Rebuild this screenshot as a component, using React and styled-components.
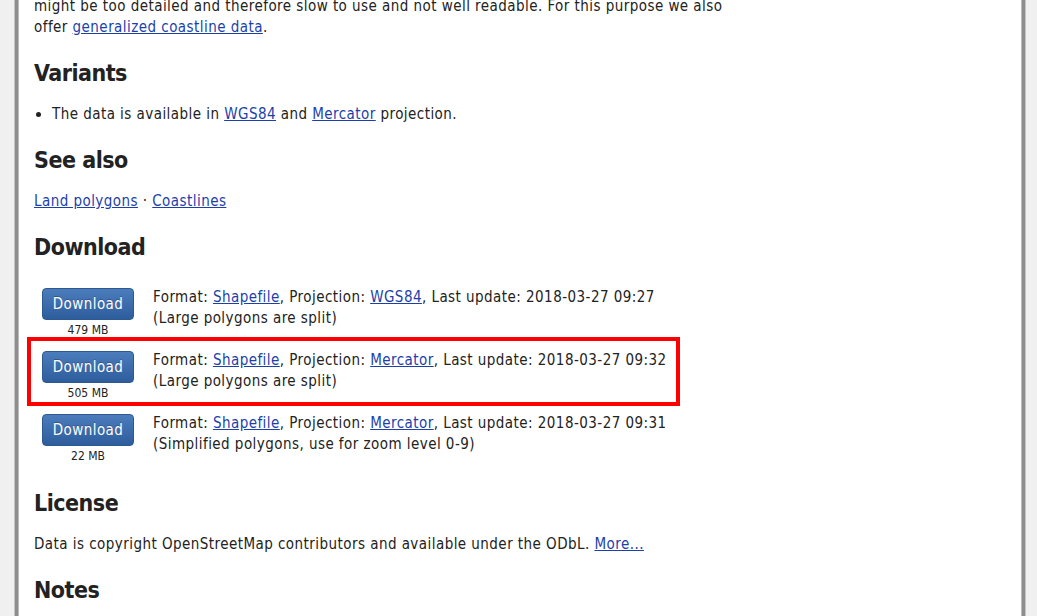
import React from 'react';
import styled, {createGlobalStyle} from 'styled-components';

const GlobalStyle = createGlobalStyle`
    html, body {
        margin: 0;
        padding: 0;
        background: #f0f0f0;
        overflow: hidden;
    }
    body {
        font-family: "DejaVu Sans Condensed", "DejaVu Sans", sans-serif;
        font-size: 15px;
        line-height: 21px;
        letter-spacing: 0.45px;
        color: #222;
    }
`

const Page = styled.div`
    margin-left: 15px;
    width: 1010px;
    height: 616px;
    background: #fff;
    border-left: 3px solid #8e8e8e;
    border-right: 3px solid #8e8e8e;
    box-shadow: -1px 0 0 #c4c4c4, 1px 0 0 #c4c4c4, inset 1px 0 0 #b8b8b8, inset -1px 0 0 #b8b8b8;
    padding: 0 16px;
    box-sizing: border-box;
    overflow: hidden;
`

const Lead = styled.p`
    margin: -4px 0 0;
    white-space: nowrap;
`

const Heading = styled.h2`
    font-size: 23px;
    line-height: 31px;
    letter-spacing: -0.5px;
    font-weight: bold;
    margin: 20px 0 15px;
    color: #222;
`

const Text = styled.p`
    margin: 0;
`

const Link = styled.a`
    color: #1c3fab;
    text-decoration: underline;
`

const List = styled.ul`
    margin: 0;
    padding-left: 18px;
`

const Rows = styled.div`
    display: flex;
    flex-direction: column;
    gap: 8px;
    margin: 18px 0 26px;
`

const Row = styled.div`
    display: flex;
    align-items: flex-start;
    gap: 19px;
    width: 639px;
    height: 55px;
    box-sizing: border-box;
    padding: 6px 0 0 8px;
    outline: ${props => props.$marked ? "4px solid #ff0000" : "none"};
    outline-offset: 3px;
`

const ButtonCell = styled.div`
    display: flex;
    flex-direction: column;
    align-items: center;
    width: 92px;
    padding-top: 1px;
`

const Button = styled.a`
    display: flex;
    align-items: center;
    justify-content: center;
    width: 92px;
    height: 32px;
    box-sizing: border-box;
    border: 1px solid #2d5890;
    border-radius: 4px;
    background: linear-gradient(#4b7cbc, #2e5d9d);
    color: #fff;
    font-size: 15px;
    text-shadow: 0 -1px 0 rgba(0, 0, 0, 0.25);
    text-decoration: none;
`

const Size = styled.div`
    font-size: 12px;
    line-height: 14px;
    letter-spacing: 0;
    margin-top: 3px;
    color: #222;
`

const Info = styled.div`
    white-space: nowrap;
`

const downloads = [
    {size: "479 MB", proj: "WGS84", time: "09:27", note: "(Large polygons are split)"},
    {size: "505 MB", proj: "Mercator", time: "09:32", note: "(Large polygons are split)", marked: true},
    {size: "22 MB", proj: "Mercator", time: "09:31", note: "(Simplified polygons, use for zoom level 0-9)"},
]

export default function App() {
    return (
        <>
            <GlobalStyle />
            <Page>
                <Lead>
                    might be too detailed and therefore slow to use and not well readable. For this purpose we also<br />
                    offer <Link href="#">generalized coastline data</Link>.
                </Lead>

                <Heading>Variants</Heading>
                <List>
                    <li>The data is available in <Link href="#">WGS84</Link> and <Link href="#">Mercator</Link> projection.</li>
                </List>

                <Heading>See also</Heading>
                <Text><Link href="#">Land polygons</Link> · <Link href="#">Coastlines</Link></Text>

                <Heading>Download</Heading>
                <Rows>
                    {downloads.map((d, i) => (
                        <Row key={i} $marked={d.marked}>
                            <ButtonCell>
                                <Button href="#">Download</Button>
                                <Size>{d.size}</Size>
                            </ButtonCell>
                            <Info>
                                Format: <Link href="#">Shapefile</Link>, Projection: <Link href="#">{d.proj}</Link>, Last update: 2018-03-27 {d.time}<br />
                                {d.note}
                            </Info>
                        </Row>
                    ))}
                </Rows>

                <Heading>License</Heading>
                <Text>Data is copyright OpenStreetMap contributors and available under the ODbL. <Link href="#">More...</Link></Text>

                <Heading>Notes</Heading>
            </Page>
        </>
    )
}
